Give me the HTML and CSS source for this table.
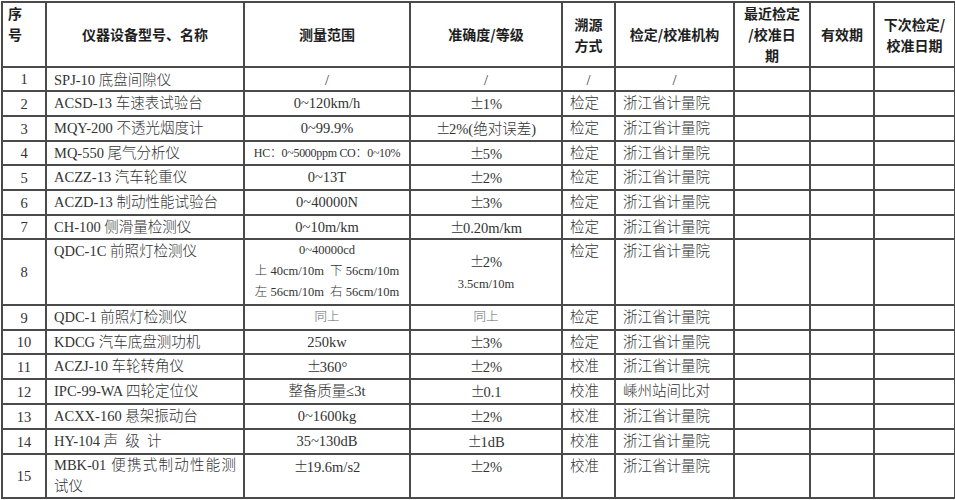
FILE: index.html
```html
<!DOCTYPE html>
<html lang="zh-CN">
<head>
<meta charset="utf-8">
<title>仪器设备一览表</title>
<link rel="stylesheet" href="styles.css">
</head>
<body>
<table class="sheet">
  <colgroup>
    <col class="c-no"><col class="c-name"><col class="c-range"><col class="c-acc"><col class="c-way"><col class="c-org"><col class="c-last"><col class="c-valid"><col class="c-next">
  </colgroup>
  <thead>
    <tr class="head">
      <th class="h-left">序<br>号</th>
      <th>仪器设备型号、名称</th>
      <th>测量范围</th>
      <th>准确度/等级</th>
      <th>溯源<br>方式</th>
      <th>检定/校准机构</th>
      <th>最近检定<br>/校准日<br>期</th>
      <th>有效期</th>
      <th>下次检定/<br>校准日期</th>
    </tr>
  </thead>
  <tbody>
    <tr class="rn h24 first"><td class="no">1</td><td>SPJ-10 底盘间隙仪</td><td class="ctr">/</td><td class="ctr">/</td><td class="ctr">/</td><td class="ctr">/</td><td></td><td></td><td></td></tr>
    <tr class="rn h25"><td class="no">2</td><td>ACSD-13 车速表试验台</td><td class="ctr">0~120km/h</td><td class="ctr"><span class="pm">±</span>1%</td><td>检定</td><td>浙江省计量院</td><td></td><td></td><td></td></tr>
    <tr class="rn h25"><td class="no">3</td><td>MQY-200 不透光烟度计</td><td class="ctr">0~99.9%</td><td class="ctr"><span class="pm">±</span>2%(绝对误差)</td><td>检定</td><td>浙江省计量院</td><td></td><td></td><td></td></tr>
    <tr class="rn h24"><td class="no">4</td><td>MQ-550 尾气分析仪</td><td class="ctr tight">HC：0~5000ppm CO：0~10%</td><td class="ctr"><span class="pm">±</span>5%</td><td>检定</td><td>浙江省计量院</td><td></td><td></td><td></td></tr>
    <tr class="rn h25"><td class="no">5</td><td>ACZZ-13 汽车轮重仪</td><td class="ctr">0~13T</td><td class="ctr"><span class="pm">±</span>2%</td><td>检定</td><td>浙江省计量院</td><td></td><td></td><td></td></tr>
    <tr class="rn h25"><td class="no">6</td><td>ACZD-13 制动性能试验台</td><td class="ctr">0~40000N</td><td class="ctr"><span class="pm">±</span>3%</td><td>检定</td><td>浙江省计量院</td><td></td><td></td><td></td></tr>
    <tr class="rn h24"><td class="no">7</td><td>CH-100 侧滑量检测仪</td><td class="ctr">0~10m/km</td><td class="ctr"><span class="pm">±</span>0.20m/km</td><td>检定</td><td>浙江省计量院</td><td></td><td></td><td></td></tr>
    <tr class="r8"><td class="no">8</td><td>QDC-1C 前照灯检测仪</td><td class="ctr small multi">0~40000cd<br>上 40cm/10m&nbsp; 下 56cm/10m<br>左 56cm/10m&nbsp; 右 56cm/10m</td><td class="ctr mid multi"><span class="pm">±</span>2%<br><span class="small">3.5cm/10m</span></td><td>检定</td><td>浙江省计量院</td><td></td><td></td><td></td></tr>
    <tr class="rn h25"><td class="no">9</td><td>QDC-1 前照灯检测仪</td><td class="ctr small faint">同上</td><td class="ctr small faint">同上</td><td>检定</td><td>浙江省计量院</td><td></td><td></td><td></td></tr>
    <tr class="rn h24"><td class="no">10</td><td>KDCG 汽车底盘测功机</td><td class="ctr">250kw</td><td class="ctr"><span class="pm">±</span>3%</td><td>检定</td><td>浙江省计量院</td><td></td><td></td><td></td></tr>
    <tr class="rn h25"><td class="no">11</td><td>ACZJ-10 车轮转角仪</td><td class="ctr"><span class="pm">±</span>360°</td><td class="ctr"><span class="pm">±</span>2%</td><td>校准</td><td>浙江省计量院</td><td></td><td></td><td></td></tr>
    <tr class="rn h25"><td class="no">12</td><td>IPC-99-WA 四轮定位仪</td><td class="ctr">整备质量≤3t</td><td class="ctr"><span class="pm">±</span>0.1</td><td>校准</td><td>嵊州站间比对</td><td></td><td></td><td></td></tr>
    <tr class="rn h25"><td class="no">13</td><td>ACXX-160 悬架振动台</td><td class="ctr">0~1600kg</td><td class="ctr"><span class="pm">±</span>2%</td><td>校准</td><td>浙江省计量院</td><td></td><td></td><td></td></tr>
    <tr class="rn h25"><td class="no">14</td><td>HY-104 声&nbsp; 级&nbsp; 计</td><td class="ctr">35~130dB</td><td class="ctr"><span class="pm">±</span>1dB</td><td>校准</td><td>浙江省计量院</td><td></td><td></td><td></td></tr>
    <tr class="r15"><td class="no">15</td><td class="just">MBK-01 便携式制动性能测试仪</td><td class="ctr"><span class="pm">±</span>19.6m/s2</td><td class="ctr"><span class="pm">±</span>2%</td><td>校准</td><td>浙江省计量院</td><td></td><td></td><td></td></tr>
  </tbody>
</table>
</body>
</html>
```

FILE: styles.css
```css
html, body {
  margin: 0;
  padding: 0;
  background: #ffffff;
}

.sheet {
  margin: 1px 0 0 1px;
  border-collapse: collapse;
  table-layout: fixed;
  width: 953px;
  font-family: "Liberation Serif", "Noto Sans CJK SC", serif;
  font-size: 14.5px;
  font-weight: 300;
  color: #333333;
}

.c-no { width: 44px; }
.c-name { width: 198px; }
.c-range { width: 166px; }
.c-acc { width: 152px; }
.c-way { width: 53px; }
.c-org { width: 119px; }
.c-last { width: 76px; }
.c-valid { width: 64px; }
.c-next { width: 81px; }

.sheet th,
.sheet td {
  border: 2px solid #4a4a4a;
  padding: 0 7px;
  line-height: 20px;
  vertical-align: top;
  text-align: left;
  white-space: nowrap;
  overflow: hidden;
}

.sheet th {
  font-family: "Noto Sans CJK SC", "Liberation Sans", sans-serif;
  font-weight: 700;
  font-size: 14px;
  line-height: 21px;
  color: #1e1e1e;
  text-align: center;
  vertical-align: middle;
  padding: 0 2px;
}

.sheet th.h-left {
  text-align: left;
  vertical-align: top;
  padding: 0 5px;
}

.head { height: 65px; }
.h24 { height: 24px; }
.h25 { height: 25px; }
.r8 { height: 66px; }
.r15 { height: 44px; }

.sheet td.no {
  text-align: center;
  vertical-align: middle;
  padding: 0;
}

.sheet td.ctr {
  text-align: center;
  padding-left: 2px;
  padding-right: 2px;
}

.first td { vertical-align: middle; }

.rn td { padding-top: 1px; }

.r8 td, .r15 td { padding-top: 1px; }

.sheet td.mid { vertical-align: middle; }

.pm {
  font-family: "Noto Sans CJK SC", sans-serif;
  display: inline-block;
  width: 13px;
  text-align: center;
}

.small { font-size: 12.5px; }

.tight {
  font-size: 12px;
  letter-spacing: -0.3px;
}

.faint { color: #666666; }

.sheet td.multi {
  line-height: 21px;
  padding-top: 0;
}

.sheet td.just {
  white-space: normal;
  text-align: justify;
  line-height: 21px;
  padding-top: 0;
}
```
